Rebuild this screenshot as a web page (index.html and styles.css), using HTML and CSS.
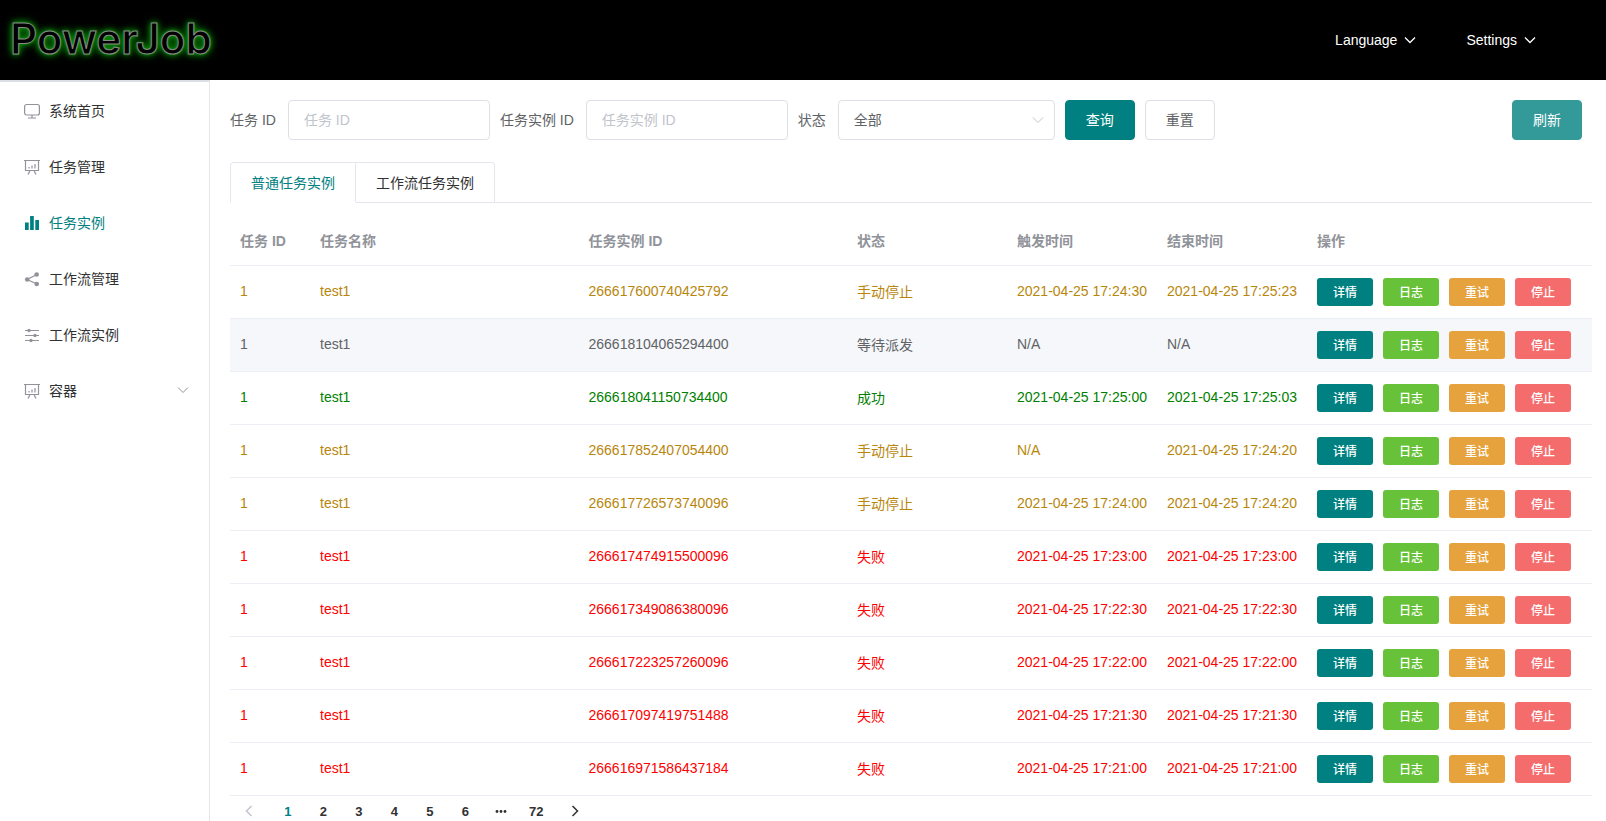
FILE: index.html
```html
<!DOCTYPE html>
<html lang="zh-CN">
<head>
<meta charset="UTF-8">
<meta name="viewport" content="width=device-width, initial-scale=1.0">
<title>PowerJob</title>
<link rel="stylesheet" href="styles.css">
</head>
<body>
<svg class="sprite" aria-hidden="true">
    <symbol id="arrow" viewBox="0 0 12 12"><path d="M1 3.5l5 5 5-5"/></symbol>
    <symbol id="board" viewBox="0 0 16 16">
        <path d="M0 1.500h16M1.500 1.500v10h13v-10M5 8v1.500M8 6.500v3M11 5v4.500M6 11.500l-2 4M10 11.500l2 4"/>
    </symbol>
</svg>
<header class="header">
    <a class="logo" href="#">PowerJob</a>
    <nav class="header-menu">
        <button type="button">Language <svg class="arrow"><use href="#arrow"/></svg></button>
        <button type="button">Settings <svg class="arrow"><use href="#arrow"/></svg></button>
    </nav>
</header>
<div class="container">
    <nav class="sidebar">
        <a href="#">
            <svg class="icon" viewBox="0 0 16 16"><rect x="0.6" y="1.500" width="14.800" height="10.500" rx="2"/><path d="M8 12v3M4 15h8"/></svg>
            系统首页
        </a>
        <a href="#"><svg class="icon"><use href="#board"/></svg>任务管理</a>
        <a href="#" class="active">
            <svg class="icon solid" viewBox="0 0 16 16"><path d="M1 7.500h3.700V15H1zM6.100 1h3.700v14H6.100zM11.300 5H15v10h-3.700z"/></svg>
            任务实例
        </a>
        <a href="#">
            <svg class="icon" viewBox="0 0 16 16"><path d="M13 3.500L3 8.500l10 4.500"/><g class="dots"><circle cx="12.700" cy="3.500" r="2.300"/><circle cx="3.200" cy="8.500" r="2.300"/><circle cx="12.700" cy="13" r="2.300"/></g></svg>
            工作流管理
        </a>
        <a href="#">
            <svg class="icon" viewBox="0 0 16 16"><path d="M1 3.500h14M1 8.500h14M1 13.500h14"/><g class="dots"><circle cx="5" cy="3.500" r="1.700"/><circle cx="11" cy="8.500" r="1.700"/><circle cx="7" cy="13.500" r="1.700"/></g></svg>
            工作流实例
        </a>
        <a href="#"><svg class="icon"><use href="#board"/></svg>容器<svg class="arrow"><use href="#arrow"/></svg></a>
    </nav>
    <main class="main">
        <form class="search" id="search-form">
            <label for="job-id">任务 ID</label>
            <input type="text" id="job-id" placeholder="任务 ID">
            <label for="instance-id">任务实例 ID</label>
            <input type="text" id="instance-id" placeholder="任务实例 ID">
            <label for="status">状态</label>
            <div class="select">
                <select id="status">
                    <option>全部</option>
                    <option>等待派发</option>
                    <option>成功</option>
                    <option>失败</option>
                    <option>手动停止</option>
                </select>
                <svg class="arrow"><use href="#arrow"/></svg>
            </div>
            <button type="button" class="btn primary">查询</button>
            <button type="reset" class="btn">重置</button>
            <button type="button" class="btn primary refresh">刷新</button>
        </form>
        <div class="tabs">
            <button type="button" class="active">普通任务实例</button>
            <button type="button">工作流任务实例</button>
        </div>
        <table class="table">
            <colgroup>
                <col class="col-id"><col><col><col class="col-status"><col class="col-time"><col class="col-time"><col class="col-action">
            </colgroup>
            <thead>
                <tr><th>任务 ID</th><th>任务名称</th><th>任务实例 ID</th><th>状态</th><th>触发时间</th><th>结束时间</th><th>操作</th></tr>
            </thead>
            <tbody id="instances"></tbody>
        </table>
        <div class="pagination">
            <button type="button" class="prev" aria-label="上一页" disabled><svg class="arrow"><use href="#arrow"/></svg></button>
            <div class="pages">
                <button type="button" class="active">1</button>
                <button type="button">2</button>
                <button type="button">3</button>
                <button type="button">4</button>
                <button type="button">5</button>
                <button type="button">6</button>
                <button type="button" aria-label="更多"><svg class="more" viewBox="0 0 12 12"><circle cx="2" cy="6.500" r="1.400"/><circle cx="6" cy="6.500" r="1.400"/><circle cx="10" cy="6.500" r="1.400"/></svg></button>
                <button type="button">72</button>
            </div>
            <button type="button" class="next" aria-label="下一页"><svg class="arrow"><use href="#arrow"/></svg></button>
        </div>
    </main>
</div>
<script src="script.js"></script>
</body>
</html>
```
FILE: styles.css
```css
* {
    box-sizing: border-box;
}
body {
    margin: 0;
    height: 100vh;
    display: flex;
    flex-direction: column;
    overflow: hidden;
    font-family: "Liberation Sans", Arial, "Noto Sans CJK SC", sans-serif;
    font-size: 14px;
    color: #606266;
    background-color: #fff;
}
button, input, select {
    font-family: inherit;
    font-size: 14px;
}
button {
    cursor: pointer;
}
a {
    text-decoration: none;
}
.sprite {
    display: none;
}
.arrow {
    width: 12px;
    height: 12px;
    fill: none;
    stroke: currentColor;
}

/* header */
.header {
    flex: none;
    display: flex;
    align-items: center;
    justify-content: space-between;
    height: 80px;
    padding: 0 70px 0 10px;
    background-color: #000;
}
.logo {
    padding-bottom: 3px;
    font-family: Inter, sans-serif;
    font-size: 42px;
    font-weight: 600;
    color: #000;
    -webkit-text-stroke: 1px #8a8a8a;
    text-shadow: 0 0 3px #0a960a, 0 0 6px #0a960a, 0 0 10px #0a960a;
}
.header-menu {
    display: flex;
    gap: 50px;
}
.header-menu button {
    display: flex;
    align-items: center;
    gap: 7px;
    padding: 0;
    border: 0;
    background: none;
    color: #fff;
}
.header-menu .arrow {
    stroke-width: 1.3;
}

/* sidebar */
.container {
    flex: 1;
    display: flex;
    min-height: 0;
}
.sidebar {
    flex: none;
    width: 210px;
    border-top: 2px solid #dcdfe6;
    border-right: 1px solid #e6e6e6;
}
.sidebar a {
    display: flex;
    align-items: center;
    gap: 9px;
    height: 56px;
    padding: 0 20px 0 24px;
    color: #303133;
}
.sidebar .icon {
    width: 16px;
    height: 16px;
    margin-top: 2px;
    fill: none;
    stroke: #909399;
    stroke-width: 1.2;
}
.sidebar .dots {
    fill: #909399;
    stroke: none;
}
.sidebar a.active {
    color: #008080;
}
.sidebar .solid {
    fill: #008080;
    stroke: none;
}
.sidebar .arrow {
    margin-left: auto;
    color: #909399;
}

/* content */
.main {
    flex: 1;
    min-width: 0;
    padding: 20px 14px 0 20px;
}
.search {
    display: flex;
    align-items: center;
    padding-right: 10px;
    margin-bottom: 22px;
}
.search label {
    padding: 0 12px 2px 0;
}
.search input, .search select {
    height: 40px;
    padding: 0 15px 1px;
    border: 1px solid #dcdfe6;
    border-radius: 4px;
    background-color: #fff;
    color: #606266;
}
.search input {
    width: 202px;
    margin-right: 10px;
}
.search input::placeholder {
    color: #c0c4cc;
}
.select {
    position: relative;
    width: 217px;
    margin-right: 10px;
}
.select select {
    width: 100%;
    appearance: none;
}
.select .arrow {
    position: absolute;
    top: 14px;
    right: 11px;
    color: #c0c4cc;
    pointer-events: none;
}
.btn {
    width: 70px;
    height: 40px;
    margin-right: 10px;
    padding: 0 0 2px;
    border: 1px solid #dcdfe6;
    border-radius: 4px;
    background-color: #fff;
    color: #606266;
}
.btn.primary {
    border-color: #008080;
    background-color: #008080;
    color: #fff;
}
.btn.refresh {
    margin: 0 0 0 auto;
    border-color: #339999;
    background-color: #339999;
}

/* tabs */
.tabs {
    display: flex;
    margin-bottom: 15px;
    border-bottom: 1px solid #e4e7ed;
}
.tabs button {
    height: 41px;
    margin-bottom: -1px;
    padding: 0 20px 2px;
    border: 1px solid #e4e7ed;
    border-left: 0;
    border-radius: 0 4px 0 0;
    background-color: #fff;
    color: #303133;
}
.tabs button.active {
    border-left: 1px solid #e4e7ed;
    border-bottom-color: #fff;
    border-radius: 4px 0 0 0;
    color: #008080;
}

/* table */
.table {
    width: 100%;
    table-layout: fixed;
    border-collapse: separate;
    border-spacing: 0;
}
.col-id {
    width: 80px;
}
.col-status {
    width: 160px;
}
.col-time {
    width: 150px;
}
.col-action {
    width: 285px;
}
.table th, .table td {
    padding: 0 10px 3px;
    border-bottom: 1px solid #ebeef5;
    text-align: left;
    white-space: nowrap;
}
.table th {
    height: 48px;
    color: #909399;
}
.table td {
    height: 53px;
}
.table td:last-child {
    padding-bottom: 0;
}
.stopped {
    color: #b8860b;
}
.success {
    color: green;
}
.failed {
    color: red;
}
.waiting {
    background-color: #f5f7fa;
}
.actions {
    display: flex;
    gap: 10px;
}
.actions button {
    width: 56px;
    height: 28px;
    padding: 0 0 1px;
    border: 0;
    border-radius: 3px;
    font-size: 12px;
    font-weight: 500;
    color: #fff;
}
.actions .detail {
    background-color: #008080;
}
.actions .log {
    background-color: #67c23a;
}
.actions .retry {
    background-color: #e6a23c;
}
.actions .stop {
    background-color: #f56c6c;
}

/* pagination */
.pagination {
    display: flex;
    padding: 1px 4px;
}
.pages {
    display: flex;
    width: 284px;
}
.pagination button {
    display: flex;
    align-items: center;
    justify-content: center;
    height: 28px;
    padding: 0;
    border: 0;
    background: none;
    font-size: 13px;
    font-weight: bold;
    color: #303133;
}
.pages button {
    flex: 1;
}
.pages button.active {
    color: #008080;
}
.pagination .prev, .pagination .next {
    width: 36px;
}
.pagination .prev {
    padding-right: 6px;
    color: #c0c4cc;
}
.pagination .next {
    padding-left: 6px;
}
.pagination .arrow {
    width: 12px;
    height: 12px;
    stroke-width: 1.5;
}
.prev .arrow {
    transform: rotate(90deg);
}
.next .arrow {
    transform: rotate(-90deg);
}
.more {
    width: 12px;
    height: 12px;
    fill: #303133;
}
```
FILE: script.js
```js
const instances = [
    ['266617600740425792', '手动停止', '2021-04-25 17:24:30', '2021-04-25 17:25:23', 'stopped'],
    ['266618104065294400', '等待派发', 'N/A', 'N/A', 'waiting'],
    ['266618041150734400', '成功', '2021-04-25 17:25:00', '2021-04-25 17:25:03', 'success'],
    ['266617852407054400', '手动停止', 'N/A', '2021-04-25 17:24:20', 'stopped'],
    ['266617726573740096', '手动停止', '2021-04-25 17:24:00', '2021-04-25 17:24:20', 'stopped'],
    ['266617474915500096', '失败', '2021-04-25 17:23:00', '2021-04-25 17:23:00', 'failed'],
    ['266617349086380096', '失败', '2021-04-25 17:22:30', '2021-04-25 17:22:30', 'failed'],
    ['266617223257260096', '失败', '2021-04-25 17:22:00', '2021-04-25 17:22:00', 'failed'],
    ['266617097419751488', '失败', '2021-04-25 17:21:30', '2021-04-25 17:21:30', 'failed'],
    ['266616971586437184', '失败', '2021-04-25 17:21:00', '2021-04-25 17:21:00', 'failed']
];

const tbody = document.getElementById('instances');

instances.forEach(([id, status, start, end, type]) => {
    const row = document.createElement('tr');
    row.className = type;
    row.innerHTML = `
        <td>1</td><td>test1</td><td>${id}</td><td>${status}</td><td>${start}</td><td>${end}</td>
        <td><div class="actions">
            <button type="button" class="detail">详情</button>
            <button type="button" class="log">日志</button>
            <button type="button" class="retry">重试</button>
            <button type="button" class="stop">停止</button>
        </div></td>`;
    tbody.appendChild(row);
});
```
